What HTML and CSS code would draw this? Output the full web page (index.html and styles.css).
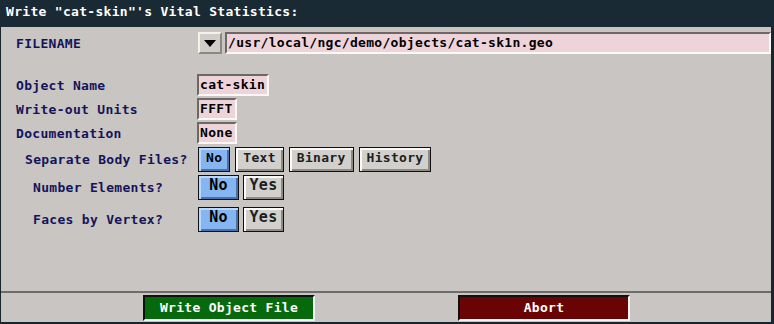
FILE: index.html
```html
<!DOCTYPE html>
<html lang="en">
<head>
    <meta charset="UTF-8">
    <title>Write Vital Statistics</title>
    <link rel="stylesheet" href="styles.css">
</head>
<body>
    <div class="window">
        <div class="titlebar">Write "cat-skin"'s Vital Statistics:</div>

        <div class="panel">
            <div class="row file-row">
                <span class="label">FILENAME</span>
                <span class="drop-btn"><span class="arrow"></span></span>
                <span class="field wide">/usr/local/ngc/demo/objects/cat-sk1n.geo</span>
            </div>

            <div class="fields">
                <div class="row">
                    <span class="label">Object Name</span>
                    <span class="field">cat-skin</span>
                </div>
                <div class="row">
                    <span class="label">Write-out Units</span>
                    <span class="field">FFFT</span>
                </div>
                <div class="row">
                    <span class="label">Documentation</span>
                    <span class="field">None</span>
                </div>
            </div>

            <div class="choices">
                <div class="row choice first">
                    <span class="label indent1">Separate Body Files?</span>
                    <div class="btns wide-gap">
                        <span class="btn on">No</span>
                        <span class="btn">Text</span>
                        <span class="btn">Binary</span>
                        <span class="btn">History</span>
                    </div>
                </div>
                <div class="row choice">
                    <span class="label indent2">Number Elements?</span>
                    <div class="btns">
                        <span class="btn on big">No</span>
                        <span class="btn big">Yes</span>
                    </div>
                </div>
                <div class="row choice last">
                    <span class="label indent2">Faces by Vertex?</span>
                    <div class="btns">
                        <span class="btn on big">No</span>
                        <span class="btn big">Yes</span>
                    </div>
                </div>
            </div>
        </div>

        <div class="footer">
            <span class="action write">Write Object File</span>
            <span class="action abort">Abort</span>
        </div>
    </div>
</body>
</html>
```

FILE: styles.css
```css
* {
    margin: 0;
    padding: 0;
    box-sizing: border-box;
}

body {
    width: 774px;
    height: 324px;
    background-color: #18242e;
    font-family: "DejaVu Sans Mono", "Liberation Mono", monospace;
    font-size: 13px;
    font-weight: bold;
    letter-spacing: 0.3px;
    color: #14145a;
    overflow: hidden;
}

.window {
    height: 322px;
    display: flex;
    flex-direction: column;
}

.titlebar {
    height: 27px;
    padding-left: 6px;
    line-height: 24px;
    color: #fff;
    background-color: #1a2a34;
}

.panel {
    flex: 1;
    margin: 0 3px 0 1px;
    padding-top: 5px;
    background-color: #c9c5c2;
}

.row {
    display: flex;
    align-items: center;
}

.label {
    width: 196px;
    padding-left: 15px;
    flex-shrink: 0;
}

.file-row {
    height: 22px;
}

.file-row .label {
    width: 197px;
}

.drop-btn {
    width: 24px;
    height: 22px;
    display: flex;
    align-items: center;
    justify-content: center;
    background-color: #d0ccc8;
    border: 2px solid;
    border-color: #f4f2e8 #8c8880 #8c8880 #f4f2e8;
    margin-right: 3px;
}

.arrow {
    width: 0;
    height: 0;
    border-left: 6px solid transparent;
    border-right: 6px solid transparent;
    border-top: 7px solid #000;
}

.field {
    height: 22px;
    line-height: 18px;
    padding: 0 2px 0 1px;
    color: #000;
    background-color: #eed4da;
    border: 2px solid;
    border-color: #6c6866 #fbf8f6 #fbf8f6 #6c6866;
}

.field.wide {
    flex: 1;
}

.fields {
    margin-top: 20px;
    display: flex;
    flex-direction: column;
    gap: 2px;
}

.fields .row {
    height: 22px;
}

.choices {
    margin-top: 3px;
    display: flex;
    flex-direction: column;
    gap: 3px;
}

.choice {
    height: 25px;
}

.choice.last {
    margin-top: 4px;
}

.choice .label {
    width: 197px;
}

.indent1 {
    padding-left: 24px !important;
}

.indent2 {
    padding-left: 32px !important;
}

.btns {
    display: flex;
    gap: 4px;
}

.btns.wide-gap {
    gap: 5px;
}

.btn {
    height: 25px;
    line-height: 19px;
    padding: 0 7px;
    color: #202020;
    background-color: #d2d0cc;
    border: 1px solid #101010;
    box-shadow: inset 2px 2px 0 #fbfaf6, inset -2px -2px 0 #8e8a86;
}

.btn.on {
    color: #000;
    background-color: #86b6f2;
    box-shadow: inset 2px 2px 0 #b8d8ff, inset -2px -2px 0 #4a70a8;
}

.btn.big {
    font-size: 15px;
    width: 41px;
    padding: 0;
    text-align: center;
}

.footer {
    height: 31px;
    margin: 0 3px 0 1px;
    padding: 2px 0 0 142px;
    display: flex;
    gap: 143px;
    background-color: #c9c5c2;
    border-top: 2px solid #6e6c6a;
}

.action {
    width: 172px;
    height: 26px;
    line-height: 22px;
    text-align: center;
    color: #fff;
    border: 2px solid;
    border-color: #101010 #f4f4f4 #f4f4f4 #101010;
}

.write {
    background-color: #066a0c;
}

.abort {
    background-color: #6a0404;
}
```
